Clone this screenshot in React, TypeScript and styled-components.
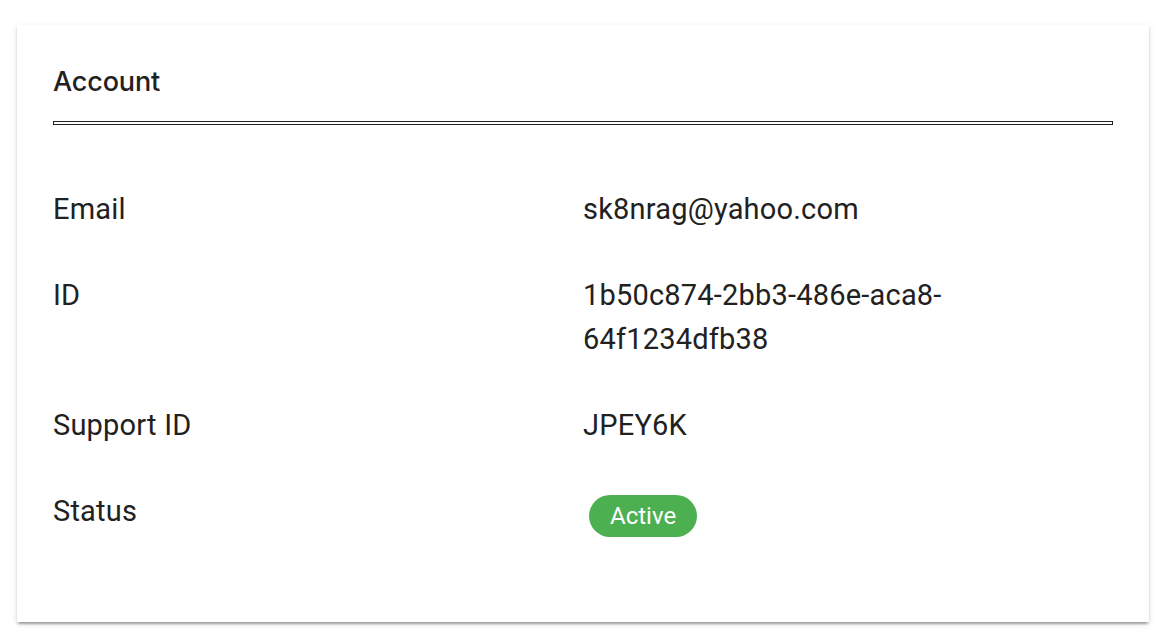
import React from 'react'
import styled, { createGlobalStyle } from 'styled-components'

const GlobalStyle = createGlobalStyle`
  html, body {
    margin: 0;
    padding: 0;
    background: #ffffff;
  }
  body {
    font-family: Roboto, 'Noto Sans', sans-serif;
    color: #212121;
  }
`

const Page = styled.div`
  padding: 25px 27px 20px 17px;
`

const Card = styled.section`
  background: #ffffff;
  padding: 36px 36px 85px;
  box-shadow:
    0 4px 2px -2px rgba(0, 0, 0, 0.2),
    0 2px 2px 0 rgba(0, 0, 0, 0.14),
    0 2px 6px 0 rgba(0, 0, 0, 0.12);
`

const Title = styled.h2`
  margin: 0;
  font-family: Inter, 'Liberation Sans', Arial, sans-serif;
  font-weight: 500;
  font-size: 27px;
  line-height: 42px;
  letter-spacing: -0.15px;
  color: #212121;
`

const Rule = styled.div`
  height: 2px;
  margin-top: 18px;
  border: 1px solid #212121;
`

const Rows = styled.dl`
  margin: 62px 0 0;
  display: grid;
  grid-template-columns: 1fr 1fr;
  row-gap: 42px;
  font-size: 29px;
  line-height: 44px;
  letter-spacing: 0.2px;
`

const Label = styled.dt`
  margin: 0;
`

const Value = styled.dd`
  margin: 0;
`

const Badge = styled.span`
  display: inline-block;
  margin: 6px 0 0 6px;
  padding: 0 21px;
  height: 42px;
  line-height: 42px;
  border-radius: 21px;
  background: #4caf50;
  color: #ffffff;
  font-size: 24px;
  letter-spacing: 0;
  vertical-align: top;
`

const rows: { label: string; value: React.ReactNode }[] = [
  { label: 'Email', value: 'sk8nrag@yahoo.com' },
  { label: 'ID', value: '1b50c874-2bb3-486e-aca8-64f1234dfb38' },
  { label: 'Support ID', value: 'JPEY6K' },
  { label: 'Status', value: <Badge>Active</Badge> }
]

export default function App() {
  return (
    <>
      <GlobalStyle />
      <Page>
        <Card>
          <Title>Account</Title>
          <Rule />
          <Rows>
            {rows.map((row) => (
              <React.Fragment key={row.label}>
                <Label>{row.label}</Label>
                <Value>{row.value}</Value>
              </React.Fragment>
            ))}
          </Rows>
        </Card>
      </Page>
    </>
  )
}
